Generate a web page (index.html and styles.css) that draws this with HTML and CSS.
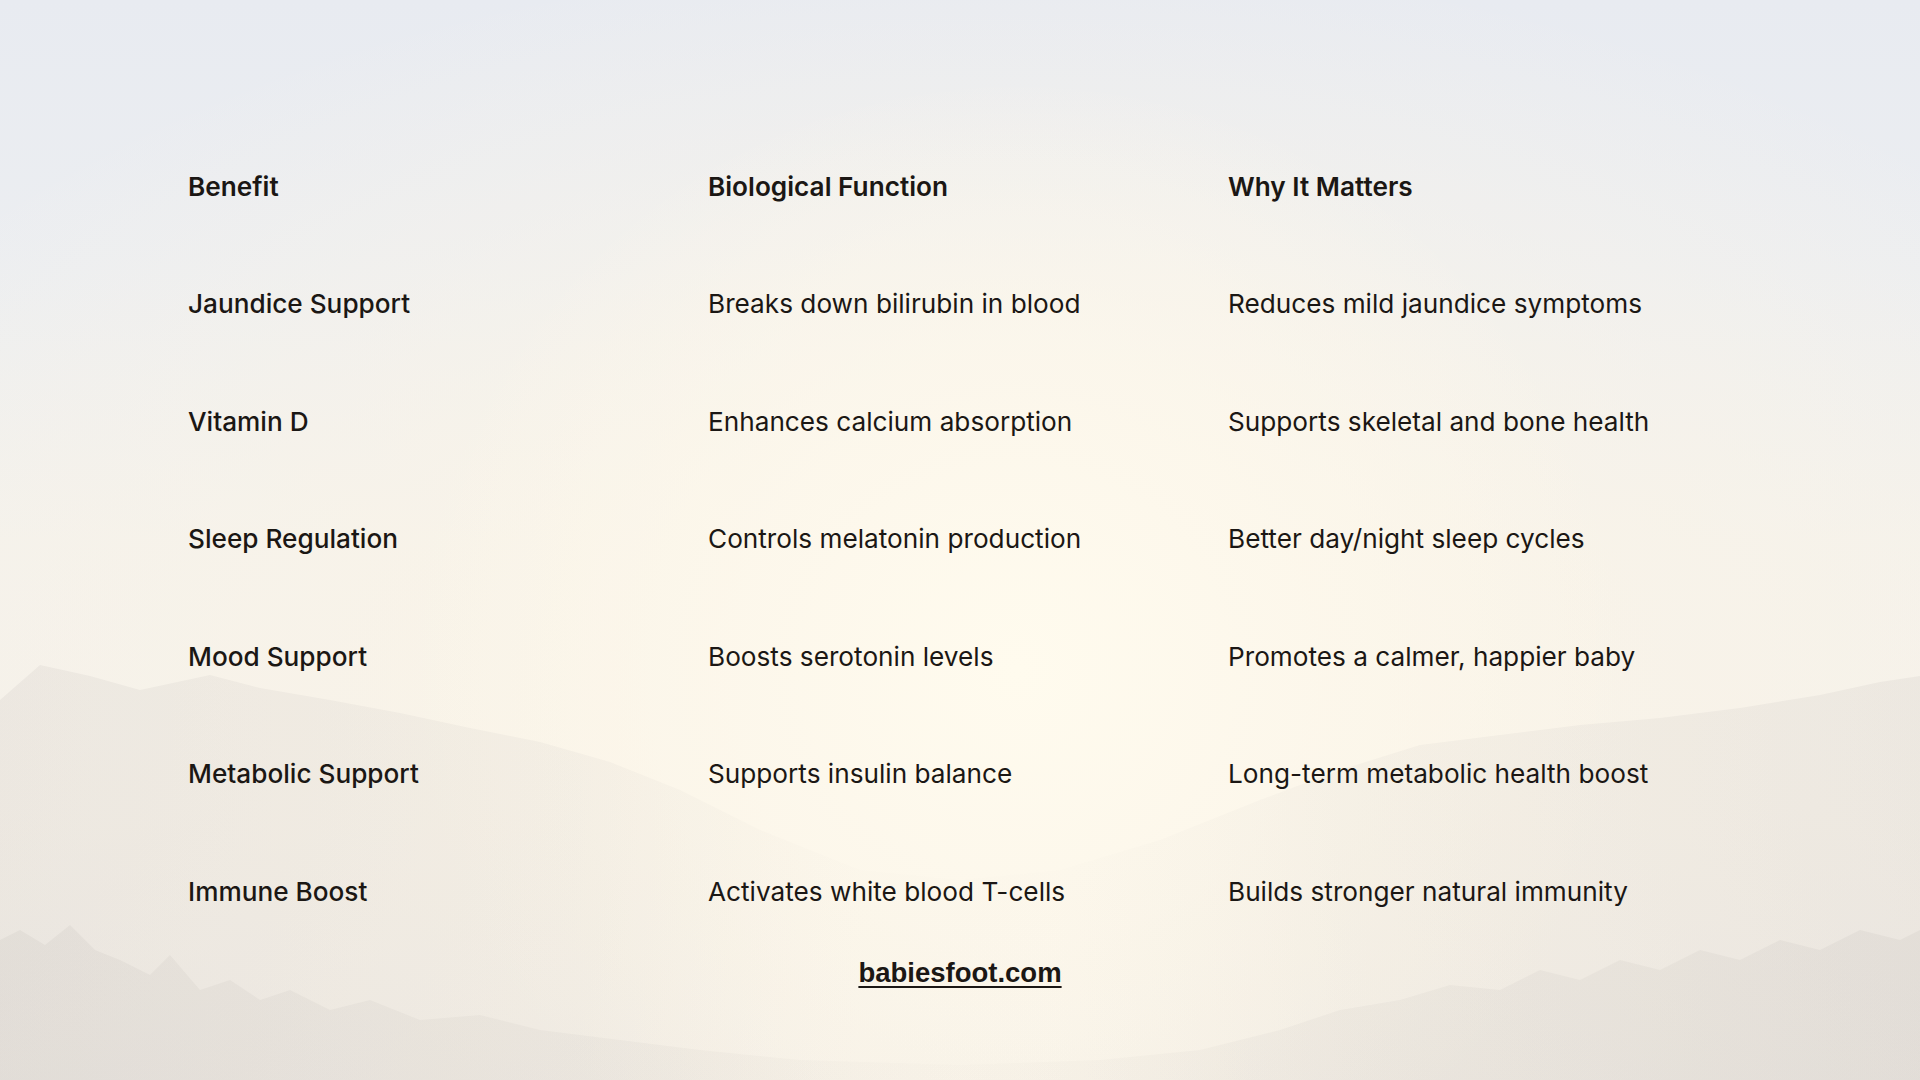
FILE: index.html
```html
<!DOCTYPE html>
<html lang="en">
<head>
<meta charset="utf-8">
<title>Sunlight Benefits</title>
<link rel="stylesheet" href="styles.css">
</head>
<body>
<div class="scene">
  <svg class="backdrop" viewBox="0 0 1920 1080" preserveAspectRatio="none" aria-hidden="true">
    <defs>
      <linearGradient id="fadeH" x1="0" y1="0" x2="1" y2="0">
        <stop offset="0" stop-color="#d6d1cc" stop-opacity="0.3"/>
        <stop offset="0.3" stop-color="#d6d1cc" stop-opacity="0.18"/>
        <stop offset="0.45" stop-color="#e2dcd3" stop-opacity="0.04"/>
        <stop offset="0.55" stop-color="#e2dcd3" stop-opacity="0.03"/>
        <stop offset="0.7" stop-color="#d6d1cc" stop-opacity="0.16"/>
        <stop offset="1" stop-color="#d6d1cc" stop-opacity="0.3"/>
      </linearGradient>
      <linearGradient id="fadeT" x1="0" y1="0" x2="1" y2="0">
        <stop offset="0" stop-color="#cfcac4" stop-opacity="0.28"/>
        <stop offset="0.35" stop-color="#cfcac4" stop-opacity="0.15"/>
        <stop offset="0.5" stop-color="#ddd6cc" stop-opacity="0.05"/>
        <stop offset="0.65" stop-color="#cfcac4" stop-opacity="0.15"/>
        <stop offset="1" stop-color="#cfcac4" stop-opacity="0.28"/>
      </linearGradient>
    </defs>
    <path fill="url(#fadeH)" d="M0,700 L40,665 L90,676 L140,690 L210,675 L260,688 L330,700 L400,713 L470,728 L540,742 L610,762 L680,790 L760,830 L860,870 L960,880 L1060,870 L1160,840 L1260,800 L1340,770 L1420,745 L1500,735 L1580,725 L1660,718 L1740,708 L1820,695 L1880,682 L1920,676 L1920,1080 L0,1080 Z"/>
    <path fill="url(#fadeT)" d="M0,940 L20,930 L45,945 L70,925 L95,950 L120,960 L150,975 L170,955 L200,990 L230,980 L260,1000 L290,990 L330,1010 L370,1000 L420,1020 L480,1015 L540,1030 L620,1040 L700,1050 L800,1060 L960,1065 L1100,1060 L1200,1050 L1280,1030 L1340,1010 L1400,1000 L1450,985 L1500,990 L1540,970 L1580,980 L1620,960 L1660,970 L1700,950 L1740,960 L1780,940 L1820,950 L1860,930 L1900,940 L1920,930 L1920,1080 L0,1080 Z"/>
  </svg>

  <main class="content">
    <div class="table">
      <div class="cell head">Benefit</div>
      <div class="cell head">Biological Function</div>
      <div class="cell head">Why It Matters</div>

      <div class="cell name">Jaundice Support</div>
      <div class="cell">Breaks down bilirubin in blood</div>
      <div class="cell">Reduces mild jaundice symptoms</div>

      <div class="cell name">Vitamin D</div>
      <div class="cell">Enhances calcium absorption</div>
      <div class="cell">Supports skeletal and bone health</div>

      <div class="cell name">Sleep Regulation</div>
      <div class="cell">Controls melatonin production</div>
      <div class="cell">Better day/night sleep cycles</div>

      <div class="cell name">Mood Support</div>
      <div class="cell">Boosts serotonin levels</div>
      <div class="cell">Promotes a calmer, happier baby</div>

      <div class="cell name">Metabolic Support</div>
      <div class="cell">Supports insulin balance</div>
      <div class="cell">Long-term metabolic health boost</div>

      <div class="cell name">Immune Boost</div>
      <div class="cell">Activates white blood T-cells</div>
      <div class="cell">Builds stronger natural immunity</div>
    </div>
    <footer class="footer">
      <a class="site" href="#">babiesfoot.com</a>
    </footer>
  </main>
</div>
</body>
</html>
```
FILE: styles.css
```css
html, body {
  margin: 0;
  padding: 0;
}

body {
  width: 1920px;
  height: 1080px;
  overflow: hidden;
  font-family: "Inter", "Liberation Sans", sans-serif;
  color: #1b1714;
}

.scene {
  position: relative;
  width: 1920px;
  height: 1080px;
  background:
    radial-gradient(ellipse 32% 55% at 53% 62%, rgba(255, 251, 238, 1) 0%, rgba(253, 248, 236, 0.9) 40%, rgba(252, 246, 234, 0) 100%),
    radial-gradient(ellipse 70% 70% at 52% 65%, rgba(252, 245, 230, 0.95) 0%, rgba(250, 244, 232, 0.6) 55%, rgba(248, 244, 236, 0) 100%),
    linear-gradient(180deg, #e8ebf1 0%, #eceef1 25%, #f3f1ec 50%, #f4f0ea 75%, #efebe7 100%);
}

.backdrop {
  position: absolute;
  inset: 0;
  width: 100%;
  height: 100%;
  z-index: 0;
}

.content {
  position: relative;
  z-index: 1;
  padding: 128px 0 0 188px;
  display: flex;
  flex-direction: column;
}

.table {
  display: grid;
  grid-template-columns: 520px 520px 520px;
  grid-auto-rows: 117.5px;
  align-items: center;
}

.cell {
  font-size: 26.2px;
  line-height: 32px;
  font-weight: 400;
}

.head {
  font-weight: 600;
}

.name {
  font-weight: 500;
}

.footer {
  margin-top: 6px;
  margin-left: -188px;
  display: flex;
  justify-content: center;
}

.site {
  font-family: "Liberation Sans", "Arial", sans-serif;
  font-weight: 700;
  font-size: 27.5px;
  line-height: 32px;
  color: #1b1714;
  text-decoration: underline;
  text-decoration-thickness: 2px;
  text-underline-offset: 4px;
}
```
